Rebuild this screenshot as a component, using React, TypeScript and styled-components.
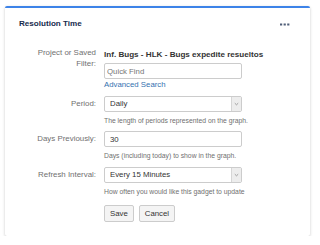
import React from 'react'
import styled, { createGlobalStyle } from 'styled-components'

const GlobalStyle = createGlobalStyle`
    body {
        margin: 0;
        background: #ffffff;
        font-family: "Liberation Sans", Arial, sans-serif;
    }
`

function Chevron() {
    return (
        <svg width="5" height="4" viewBox="0 0 5 4">
            <path d="M0.8 1.2 L2.5 2.8 L4.2 1.2" fill="none" stroke="#8a8a8a" strokeWidth="0.8" />
        </svg>
    )
}

function Select({ value }: { value: string }) {
    return (
        <SelectBox>
            <SelectValue>{value}</SelectValue>
            <ArrowBox>
                <Chevron />
            </ArrowBox>
        </SelectBox>
    )
}

export default function App() {
    return (
        <>
            <GlobalStyle />
            <Card>
                <Header>
                    <Title>Resolution Time</Title>
                    <svg width="10" height="3" viewBox="0 0 10 3">
                        <rect x="0" y="0.5" width="2.2" height="2" fill="#505f79" />
                        <rect x="3.6" y="0.5" width="2.2" height="2" fill="#505f79" />
                        <rect x="7.2" y="0.5" width="2.2" height="2" fill="#505f79" />
                    </svg>
                </Header>
                <Form>
                    <Row>
                        <Label>Project or Saved<br />Filter:</Label>
                        <Field>
                            <FilterName>Inf. Bugs - HLK - Bugs expedite resueltos</FilterName>
                            <TextInput placeholder="Quick Find" />
                            <Link>Advanced Search</Link>
                        </Field>
                    </Row>
                    <Row gap={6}>
                        <Label inline>Period:</Label>
                        <Field>
                            <Select value="Daily" />
                            <Help>The length of periods represented on the graph.</Help>
                        </Field>
                    </Row>
                    <Row gap={6}>
                        <Label inline>Days Previously:</Label>
                        <Field>
                            <TextInput defaultValue="30" filled />
                            <Help>Days (including today) to show in the graph.</Help>
                        </Field>
                    </Row>
                    <Row gap={7}>
                        <Label inline>Refresh Interval:</Label>
                        <Field>
                            <Select value="Every 15 Minutes" />
                            <Help>How often you would like this gadget to update</Help>
                        </Field>
                    </Row>
                    <Row gap={9}>
                        <span />
                        <Buttons>
                            <Button>Save</Button>
                            <Button>Cancel</Button>
                        </Buttons>
                    </Row>
                </Form>
            </Card>
        </>
    )
}

const Card = styled.div`
    margin: 6px 0 0 5px;
    width: 305px;
    background: #ffffff;
    border-top: 2px solid #3d83e8;
    border-radius: 2px;
    box-shadow: 0 1px 3px rgba(0, 0, 0, 0.22);
    padding-bottom: 14px;
`

const Header = styled.div`
    display: flex;
    align-items: center;
    justify-content: space-between;
    padding: 11px 20px 0 14px;
    height: 10px;
`

const Title = styled.div`
    font-size: 8.1px;
    font-weight: bold;
    line-height: 10px;
    color: #172b4d;
`

const Form = styled.div`
    padding-top: 18px;
    display: flex;
    flex-direction: column;
`

const Row = styled.div<{ gap?: number }>`
    display: grid;
    grid-template-columns: 91px 138px;
    column-gap: 8px;
    margin-top: ${({ gap }) => gap || 0}px;
`

const Label = styled.div<{ inline?: boolean }>`
    text-align: right;
    font-size: 7.9px;
    line-height: ${({ inline }) => inline ? '16px' : '11.3px'};
    color: #707070;
`

const Field = styled.div`
    display: flex;
    flex-direction: column;
`

const FilterName = styled.div`
    margin-top: 3px;
    font-size: 8.1px;
    font-weight: bold;
    line-height: 10px;
    color: #333333;
    white-space: nowrap;
`

const TextInput = styled.input<{ filled?: boolean }>`
    box-sizing: border-box;
    margin: ${({ filled }) => filled ? '0' : '3px 0 0'};
    height: 16px;
    width: 138px;
    border: 1px solid #cccccc;
    border-radius: 2px;
    padding: 0 ${({ filled }) => filled ? '5px' : '2px'};
    font-family: "Liberation Sans", Arial, sans-serif;
    font-size: 7.8px;
    color: #333333;
    outline: none;

    ::placeholder {
        color: #8c8c8c;
    }
`

const Link = styled.a`
    margin-top: 1px;
    font-size: 7.8px;
    line-height: 10px;
    color: #3572b0;
`

const SelectBox = styled.div`
    box-sizing: border-box;
    display: flex;
    height: 16px;
    border: 1px solid #cccccc;
    border-radius: 2px;
    background: #ffffff;
`

const SelectValue = styled.div`
    flex: 1;
    padding-left: 5px;
    font-size: 7.8px;
    line-height: 14px;
    color: #333333;
`

const ArrowBox = styled.div`
    width: 9px;
    display: flex;
    align-items: center;
    justify-content: center;
    background: #ededed;
    border-left: 1px solid #d6d6d6;
`

const Help = styled.div`
    margin-top: 4px;
    font-size: 6.8px;
    line-height: 9px;
    color: #707070;
    white-space: nowrap;
`

const Buttons = styled.div`
    display: flex;
    gap: 5px;
`

const Button = styled.button`
    box-sizing: border-box;
    height: 17px;
    padding: 0 5px;
    border: 1px solid #cccccc;
    border-radius: 2px;
    background: #f4f4f4;
    font-family: "Liberation Sans", Arial, sans-serif;
    font-size: 7.8px;
    color: #333333;
`
